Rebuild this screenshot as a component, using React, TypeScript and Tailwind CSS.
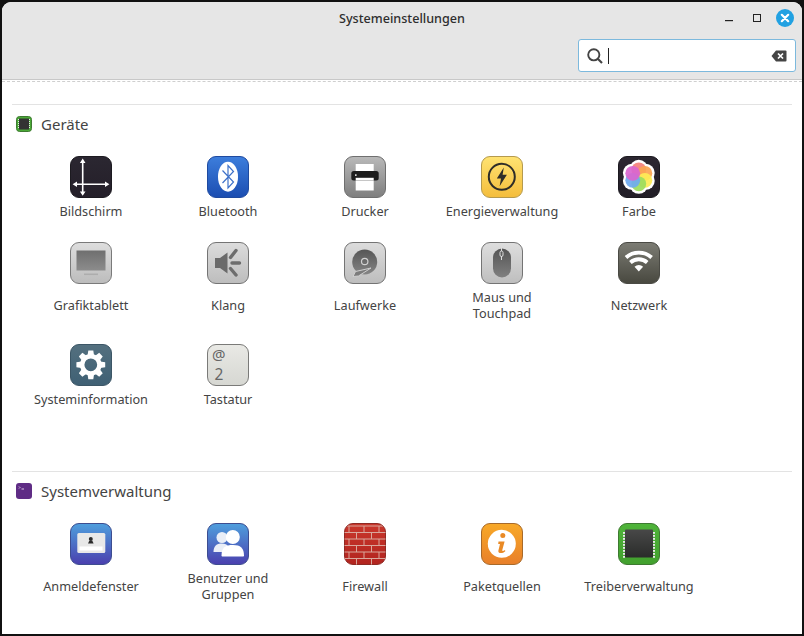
import React from "react";

function Tile({ id, from, to, border, children }: { id: string; from: string; to: string; border: string; children?: React.ReactNode }) {
  return (
    <svg width="42" height="42" viewBox="0 0 42 42" className="block">
      <defs>
        <linearGradient id={id} x1="0" y1="0" x2="0" y2="1">
          <stop offset="0" stopColor={from} />
          <stop offset="1" stopColor={to} />
        </linearGradient>
        <clipPath id={id + "c"}>
          <rect x="0.5" y="0.5" width="41" height="41" rx="8.5" />
        </clipPath>
      </defs>
      <rect x="0.5" y="0.5" width="41" height="41" rx="8.5" fill={`url(#${id})`} stroke={border} />
      <g clipPath={`url(#${id}c)`}>{children}</g>
    </svg>
  );
}

const Display = () => (
  <Tile id="a1" from="#2b2731" to="#241f29" border="#1c1a20">
    <path d="M12.7 5v32M5 28.3h32" stroke="#fff" strokeWidth="1.6" />
    <path d="M12.7 2.6l-2.8 4.4h5.6zM12.7 39.8l-2.8-4.4h5.6zM2.6 28.3l4.4-2.8v5.6zM39.4 28.3l-4.4-2.8v5.6z" fill="#fff" />
  </Tile>
);
const Bluetooth = () => (
  <Tile id="a2" from="#3d7edc" to="#1b4db1" border="#1f4a9f">
    <ellipse cx="21" cy="20.7" rx="10" ry="15" fill="#fff" />
    <path d="M15.5 14.5 L26.5 26 L21 32 V9.5 L26.5 15.5 L15.5 27" fill="none" stroke="#3f72c9" strokeWidth="1.2" />
  </Tile>
);
const Printer = () => (
  <Tile id="a3" from="#b9b9b9" to="#7e7e7e" border="#6f6f6f">
    <rect x="11.7" y="8" width="18" height="7" fill="#fff" />
    <rect x="11.7" y="24" width="18" height="10.5" fill="#fff" />
    <rect x="7.3" y="15" width="27.4" height="9.5" rx="2.5" fill="#1d1d1d" />
    <rect x="11.7" y="21.8" width="18" height="2.7" fill="#fff" />
    <rect x="11" y="18.4" width="1.6" height="1.4" fill="#fff" />
  </Tile>
);
const Energy = () => (
  <Tile id="a4" from="#ffe372" to="#f4bd3c" border="#b59a4e">
    <circle cx="20.8" cy="20.8" r="13" fill="none" stroke="#2f2d28" strokeWidth="2" />
    <path d="M22.8 11.5 L15.8 22.5 H20 L18.6 30.2 L25.9 18.8 H21.6 Z" fill="#2f2d28" />
  </Tile>
);
const Colour = () => {
  const petals = ["#f4807a", "#fba552", "#fdeb56", "#9cdc5d", "#6faaf0", "#d966cf"];
  return (
    <Tile id="a5" from="#2c2731" to="#221e27" border="#1b191f">
      {petals.map((_, i) => {
        const a = ((i * 60 - 90) * Math.PI) / 180;
        return <circle key={i} cx={20.8 + 8 * Math.cos(a)} cy={20.8 + 8 * Math.sin(a)} r="9" fill="#fff" />;
      })}
      {petals.map((c, i) => {
        const a = ((i * 60 - 90) * Math.PI) / 180;
        return <circle key={i} cx={20.8 + 7 * Math.cos(a)} cy={20.8 + 7 * Math.sin(a)} r="7.4" fill={c} fillOpacity="0.92" />;
      })}
    </Tile>
  );
};
const Tablet = () => (
  <Tile id="a6" from="#dedede" to="#bcbcbc" border="#7a7a7a">
    <defs>
      <linearGradient id="a6s" x1="0" y1="0" x2="0" y2="1">
        <stop offset="0" stopColor="#6f6f6f" />
        <stop offset="1" stopColor="#8c8c8c" />
      </linearGradient>
    </defs>
    <rect x="6.5" y="8.5" width="29" height="20" fill="url(#a6s)" />
    <rect x="14" y="31.5" width="14" height="1.6" fill="#adadad" />
  </Tile>
);
const Sound = () => (
  <Tile id="a7" from="#dcdcdc" to="#bdbdbd" border="#747474">
    <path d="M8 16h5l7.5-5.5v21L13 26H8z" fill="#6a6a6a" />
    <path d="M23.5 15.5l5.5-7M25 21h7.5M23.5 26.5l5.5 6.5" stroke="#6d6d6d" strokeWidth="3.4" strokeLinecap="round" fill="none" />
  </Tile>
);
const Drive = () => (
  <Tile id="a8" from="#dcdcdc" to="#bdbdbd" border="#747474">
    <defs>
      <linearGradient id="a8s" x1="0" y1="0" x2="0" y2="1">
        <stop offset="0" stopColor="#565656" />
        <stop offset="1" stopColor="#858585" />
      </linearGradient>
    </defs>
    <circle cx="20.7" cy="20" r="12.5" fill="url(#a8s)" />
    <circle cx="20.7" cy="19.5" r="3.2" fill="none" stroke="#d2d2d2" strokeWidth="1.2" />
    <path d="M9 34.5l2.5-5 15.5-3.5 -12.5 8z" fill="#7c7c7c" stroke="#cfcfcf" strokeWidth="1" strokeLinejoin="round" />
  </Tile>
);
const Mouse = () => (
  <Tile id="a9" from="#dedede" to="#bebebe" border="#747474">
    <defs>
      <linearGradient id="a9s" x1="0" y1="0" x2="0" y2="1">
        <stop offset="0" stopColor="#555" />
        <stop offset="1" stopColor="#808080" />
      </linearGradient>
    </defs>
    <rect x="12" y="6.5" width="18" height="29" rx="9" fill="url(#a9s)" />
    <path d="M20.5 4v5M20.5 14v4" stroke="#ddd" strokeWidth="1" />
    <rect x="19" y="9" width="3" height="5.5" rx="1.5" fill="none" stroke="#ddd" strokeWidth="1" />
  </Tile>
);
const Network = () => (
  <Tile id="a10" from="#7c7c74" to="#48483f" border="#4a4a44">
    <path d="M8 15.5a19 19 0 0 1 25.6 0" fill="none" stroke="#fff" strokeWidth="3.8" />
    <path d="M12.4 20.5a12.5 12.5 0 0 1 16.8 0" fill="none" stroke="#fff" strokeWidth="3.8" />
    <path d="M16.5 24.8a6.2 6.2 0 0 1 8.6 0L20.8 29.5z" fill="#fff" />
  </Tile>
);
const Gear = () => {
  const teeth = Array.from({ length: 8 }, (_, i) => i * 45);
  return (
    <Tile id="a11" from="#54707f" to="#3f6074" border="#3c5666">
      {teeth.map((t) => (
        <path key={t} d="M18.3 6.4h5l1 6.6h-7z" fill="#fff" transform={`rotate(${t} 20.8 20.8)`} />
      ))}
      <circle cx="20.8" cy="20.8" r="8.6" fill="none" stroke="#fff" strokeWidth="4.4" />
    </Tile>
  );
};
const Keyboard = () => (
  <Tile id="a12" from="#e9e9e5" to="#d6d7d2" border="#7a7a78">
    <text x="5" y="15.5" fontSize="15" fill="#666" fontFamily="'Noto Sans', sans-serif">@</text>
    <text x="7.5" y="36" fontSize="15.5" fill="#666" fontFamily="'Noto Sans', sans-serif">2</text>
  </Tile>
);
const Login = () => (
  <Tile id="b1" from="#4f9fdd" to="#4a3fae" border="#3d4d90">
    <rect x="7.3" y="10" width="28" height="20" rx="1.5" fill="#e8e8e8" />
    <rect x="9.5" y="23.5" width="23" height="4" fill="#fff" />
    <circle cx="20.8" cy="16" r="2" fill="#2b2b2b" />
    <path d="M18 20.5l1.3-2.7h3l1.3 2.7z" fill="#2b2b2b" />
  </Tile>
);
const Users = () => (
  <Tile id="b2" from="#4f9fdd" to="#4a3fae" border="#3d4d90">
    <circle cx="15" cy="14.5" r="5.5" fill="#e9eef7" />
    <path d="M6.5 29c0-6 3-8.5 8.5-8.5 3 0 5 1 6 2.5l-5 6z" fill="#e9eef7" />
    <circle cx="25.8" cy="14" r="7" fill="#fff" />
    <path d="M14.5 32.5c0-8 4-10.5 11.5-10.5 7.5 0 11 3 11 10.5 0 .6-.5 1-1 1H15.5c-.5 0-1-.4-1-1z" fill="#fff" />
  </Tile>
);
const Firewall = () => {
  const ys = [3, 9.5, 16, 22.5, 29, 35.5];
  return (
    <Tile id="b3" from="#c9372c" to="#b2241f" border="#8e2a24">
      {ys.map((y) => (
        <path key={y} d={`M0 ${y}H42`} stroke="#d9a79c" strokeWidth="1" />
      ))}
      {ys.map((y, i) => {
        const xs = i % 2 === 0 ? [5, 20, 35] : [12.5, 27.5];
        return xs.map((x) => <path key={`${y}-${x}`} d={`M${x} ${y}v6.5`} stroke="#d9a79c" strokeWidth="1" />);
      })}
    </Tile>
  );
};
const Packages = () => (
  <Tile id="b4" from="#f8a928" to="#e87f2a" border="#a86a2a">
    <circle cx="20.8" cy="20.8" r="14" fill="#fff" />
    <circle cx="21.8" cy="12.6" r="2.5" fill="#e98a26" />
    <path d="M17.5 18.5 H23.6 L21.3 27 C21 28.4 22.2 28.4 24 27 L24.3 28.2 C21.8 30.7 16.6 31 17.4 27.4 L19 21 H17.2 Z" fill="#e98a26" />
  </Tile>
);
const Chip = () => {
  const dots = Array.from({ length: 9 }, (_, i) => 9 + i * 3);
  return (
    <Tile id="b5" from="#4fb43a" to="#42a02e" border="#3e7a31">
      <defs>
        <linearGradient id="b5s" x1="0" y1="0" x2="0" y2="1">
          <stop offset="0" stopColor="#484848" />
          <stop offset="1" stopColor="#2a2c2a" />
        </linearGradient>
      </defs>
      <rect x="7" y="6.5" width="28" height="28" rx="1" fill="url(#b5s)" />
      {dots.map((y) => (
        <React.Fragment key={y}>
          <rect x="5" y={y} width="2" height="1.8" fill="#e8e8e8" />
          <rect x="35" y={y} width="2" height="1.8" fill="#e8e8e8" />
        </React.Fragment>
      ))}
    </Tile>
  );
};
const SmallChip = () => (
  <svg width="16" height="16" viewBox="0 0 16 16" className="block">
    <rect x="0.5" y="0.5" width="15" height="15" rx="3" fill="#4aa936" stroke="#3e7a31" />
    <rect x="3" y="2.5" width="10" height="11" fill="#333" />
    <path d="M2.5 3v10M13.5 3v10" stroke="#e8e8e8" strokeWidth="1" strokeDasharray="1 1" />
  </svg>
);
const SmallTerm = () => (
  <svg width="16" height="16" viewBox="0 0 16 16" className="block">
    <rect x="0" y="0" width="16" height="16" rx="3" fill="#5f2c85" />
    <path d="M3 3.5l1 1-1 1M5.5 6H8" stroke="#e6dcee" strokeWidth="0.9" fill="none" />
  </svg>
);

type Item = { label: string; icon: React.ReactNode };

const geraete: Item[] = [
  { label: "Bildschirm", icon: <Display /> },
  { label: "Bluetooth", icon: <Bluetooth /> },
  { label: "Drucker", icon: <Printer /> },
  { label: "Energieverwaltung", icon: <Energy /> },
  { label: "Farbe", icon: <Colour /> },
  { label: "Grafiktablett", icon: <Tablet /> },
  { label: "Klang", icon: <Sound /> },
  { label: "Laufwerke", icon: <Drive /> },
  { label: "Maus und Touchpad", icon: <Mouse /> },
  { label: "Netzwerk", icon: <Network /> },
  { label: "Systeminformation", icon: <Gear /> },
  { label: "Tastatur", icon: <Keyboard /> },
];
const verwaltung: Item[] = [
  { label: "Anmeldefenster", icon: <Login /> },
  { label: "Benutzer und Gruppen", icon: <Users /> },
  { label: "Firewall", icon: <Firewall /> },
  { label: "Paketquellen", icon: <Packages /> },
  { label: "Treiberverwaltung", icon: <Chip /> },
];

function Grid({ items }: { items: Item[] }) {
  return (
    <div className="grid grid-cols-[repeat(5,137px)] gap-y-[23px] ml-[10.5px]">
      {items.map((it) => (
        <div key={it.label} className="flex flex-col items-center">
          {it.icon}
          <div className="mt-[5px] flex-1 flex items-center justify-center min-h-4 w-[118px] text-center text-[12.7px] leading-4 text-[#444]">
            {it.label}
          </div>
        </div>
      ))}
    </div>
  );
}

function Section({ icon, title, spacer }: { icon: React.ReactNode; title: string; spacer: string }) {
  return (
    <section className={spacer}>
      <div className="h-px bg-[#e3e3e3] mr-[10px]" />
      <div className="flex items-center gap-[9px] h-[38px] pl-1 text-[15px] text-[#444]">
        {icon}
        <span>{title}</span>
      </div>
    </section>
  );
}

export default function App() {
  return (
    <div className="bg-[#111] w-[804px] h-[636px] p-[2px]">
      <div className="w-[800px] h-[632px] bg-white rounded-t-[9px] overflow-hidden flex flex-col font-['Noto_Sans',sans-serif]">
        <header className="h-[78px] shrink-0 bg-[#e6e6e6] border-b border-[#c8c8c8] flex flex-col">
          <div className="relative h-[37px] flex items-center justify-center">
            <span className="text-[12.6px] font-medium text-[#2e2e2e] mt-[-2px]">Systemeinstellungen</span>
            <div className="absolute right-[8px] top-[7px] flex items-center">
              <svg width="8" height="2" viewBox="0 0 8 2" className="mt-[5px]"><rect width="8" height="1.2" fill="#222" /></svg>
              <svg width="8" height="8" viewBox="0 0 8 8" className="ml-[20px]"><rect x="0.5" y="0.5" width="7" height="7" fill="none" stroke="#222" /></svg>
              <svg width="18" height="18" viewBox="0 0 18 18" className="ml-[15px]">
                <circle cx="9" cy="9" r="9" fill="#21a1e2" />
                <path d="M5.8 5.8l6.4 6.4M12.2 5.8l-6.4 6.4" stroke="#fff" strokeWidth="2.2" strokeLinecap="round" />
              </svg>
            </div>
          </div>
          <div className="flex justify-end pr-[6px]">
            <div className="w-[218px] h-[33px] bg-white border border-[#7cb9dd] rounded-[3px] flex items-center pl-[8px] pr-[8px]">
              <svg width="16" height="16" viewBox="0 0 16 16">
                <circle cx="6.8" cy="6.8" r="5.6" fill="none" stroke="#444" strokeWidth="1.9" />
                <path d="M11 11l4 4" stroke="#444" strokeWidth="2.2" />
              </svg>
              <div className="w-px h-[16px] bg-[#222] ml-[5px]" />
              <svg width="16" height="12" viewBox="0 0 16 12" className="ml-auto">
                <path d="M5 .5h9.5a1 1 0 0 1 1 1v9a1 1 0 0 1-1 1H5L.5 6z" fill="#444" />
                <path d="M7 3.5l5 5M12 3.5l-5 5" stroke="#fff" strokeWidth="1.7" />
              </svg>
            </div>
          </div>
        </header>
        <div className="h-px mt-px border-t border-dashed border-[#cfcfcf]" />
        <main className="flex-1 pl-[10px]">
          <Section icon={<SmallChip />} title="Geräte" spacer="mt-[22px]" />
          <div className="mt-[13px]">
            <Grid items={geraete} />
          </div>
          <Section icon={<SmallTerm />} title="Systemverwaltung" spacer="mt-[64px]" />
          <div className="mt-[13px]">
            <Grid items={verwaltung} />
          </div>
        </main>
      </div>
    </div>
  );
}
